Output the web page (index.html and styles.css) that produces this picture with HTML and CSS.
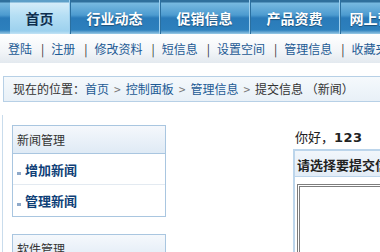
FILE: index.html
```html
<!DOCTYPE html>
<html lang="zh-CN">
  <head>
    <meta charset="UTF-8" />
    <title>控制面板 - 提交信息</title>
    <link rel="stylesheet" href="styles.css">
  </head>
  <body>
    <nav class="topnav">
      <span class="nav-edge"></span>
      <a class="tab active" href="#">首页</a>
      <a class="tab" href="#">行业动态</a>
      <a class="tab" href="#">促销信息</a>
      <a class="tab" href="#">产品资费</a>
      <a class="tab" href="#">网上营业厅</a>
    </nav>

    <!-- ingen mellemrum mellem links, ellers bliver afstanden for stor -->
    <div class="subnav"><a href="#">登陆</a><span class="sep">|</span><a href="#">注册</a><span class="sep">|</span><a href="#">修改资料</a><span class="sep">|</span><a href="#">短信息</a><span class="sep">|</span><a href="#">设置空间</a><span class="sep">|</span><a href="#">管理信息</a><span class="sep">|</span><a href="#">收藏夹</a></div>

    <div class="crumbs">
      现在的位置：<a href="#">首页</a><span class="arrow">&gt;</span><a href="#">控制面板</a><span class="arrow">&gt;</span><a href="#">管理信息</a><span class="arrow">&gt;</span>提交信息 （新闻）
    </div>

    <main class="main">
      <aside class="sidebar">
        <div class="sidebox">
          <h3 class="sidebox-title">新闻管理</h3>
          <ul class="sidebox-list">
            <li><a href="#">增加新闻</a></li>
            <li><a href="#">管理新闻</a></li>
          </ul>
        </div>
        <div class="sidebox">
          <h3 class="sidebox-title">软件管理</h3>
          <ul class="sidebox-list">
            <li><a href="#">增加软件</a></li>
            <li><a href="#">管理软件</a></li>
          </ul>
        </div>
      </aside>

      <section class="content">
        <p class="hello">你好，<b>123</b></p>
        <div class="panel">
          <h3 class="panel-title">请选择要提交信息的栏目</h3>
          <div class="panel-body">
            <div class="listbox"></div>
          </div>
        </div>
      </section>
    </main>
  </body>
</html>
```

FILE: styles.css
```css
/* ---------GRUND------------*/
* {
  margin: 0;
  padding: 0;
  box-sizing: border-box;
}

body {
  font-family: "Noto Sans CJK SC", "DejaVu Sans", sans-serif;
  font-size: 12px;
  color: #333;
  background-color: #fff;
  overflow: hidden;
}

a {
  text-decoration: none;
}

ul {
  list-style: none;
}

/* ---------TOP NAV------------*/
.topnav {
  display: flex;
  height: 34px;
  white-space: nowrap;
  background: linear-gradient(#2f6f9c 0, #2f6f9c 2px, #78b9e0 3px, #4d9bd0 15px, #2a7bb9 18px, #2d80bd 30px, #7fb8dc 33px, #9ccbe6 34px);
}

.nav-edge {
  width: 10px;
  flex: none;
}

.tab {
  flex: none;
  width: 90px;
  line-height: 32px;
  padding-top: 2px;
  text-align: center;
  font-size: 14px;
  font-weight: bold;
  color: #fff;
  text-shadow: 0 1px 1px #1b4f78;
  border-left: 1px solid #9fd0ee;
  box-shadow: inset 1px 0 0 #2a6f9f;
}

.tab.active {
  width: 59px;
  color: #0f2f4f;
  text-shadow: none;
  border-left: 0;
  box-shadow: none;
  background: linear-gradient(#5d9fc8 0, #5d9fc8 2px, #d4ecf9 3px, #b4def4 16px, #9dd1ee 31px, #c3e3f5 34px);
}

/* ---------SUB NAV------------*/
.subnav {
  height: 29px;
  line-height: 29px;
  padding-left: 8px;
  white-space: nowrap;
  background: linear-gradient(#ffffff, #f2f5f8 60%, #e3e9ef);
}

.subnav a {
  color: #1d5a94;
}

.subnav .sep {
  color: #333;
  margin: 0 7px 0 9px;
}

/* ---------BREADCRUMB------------*/
.crumbs {
  margin: 13px 0 0 3px;
  height: 26px;
  line-height: 24px;
  padding-left: 9px;
  white-space: nowrap;
  color: #333;
  border: 1px solid #b7d0e6;
  border-right: 0;
  background: linear-gradient(#f5f9fc, #e8f0f7);
}

.crumbs a {
  color: #1d5a94;
}

.crumbs .arrow {
  color: #777;
  margin: 0 5px;
}

/* ---------MAIN------------*/
.main {
  display: flex;
  margin-top: 13px;
  gap: 121px;
}

.sidebar {
  flex: none;
  width: 170px;
  margin-left: 2px;
  padding: 10px 0 0 9px;
  border-left: 1px solid #c9dcec;
}

.sidebox {
  width: 154px;
  border: 1px solid #a9c6e0;
  margin-bottom: 17px;
}

.sidebox-title {
  height: 28px;
  line-height: 27px;
  padding-left: 4px;
  font-size: 12px;
  font-weight: normal;
  color: #333;
  border-bottom: 1px solid #a9c6e0;
  background: linear-gradient(#f5f8fc, #dfeaf5);
}

.sidebox-list li {
  height: 31px;
  line-height: 31px;
  padding-left: 4px;
  border-bottom: 1px solid #e3eaf1;
}

.sidebox-list li:last-child {
  border-bottom: 0;
}

.sidebox-list li::before {
  content: "";
  display: inline-block;
  width: 4px;
  height: 3px;
  margin-right: 4px;
  background-color: #8fa9c9;
}

.sidebox-list a {
  font-size: 13px;
  font-weight: bold;
  color: #0f3f77;
}

/* ---------CONTENT------------*/
.content {
  flex: 1;
  min-width: 0;
}

.hello {
  padding: 12px 0 0 2px;
  height: 34px;
  line-height: 20px;
  font-size: 13px;
  color: #222;
  white-space: nowrap;
}

.hello b {
  font-family: "DejaVu Sans", sans-serif;
  font-weight: bold;
  letter-spacing: 0.5px;
}

.panel {
  border: 2px solid #bcd5eb;
  border-right: 0;
  border-bottom: 0;
  height: 200px;
}

.panel-title {
  height: 26px;
  line-height: 27px;
  padding-left: 2px;
  font-size: 13px;
  font-weight: bold;
  color: #222;
  white-space: nowrap;
  border-bottom: 1px solid #bcd5eb;
  background: linear-gradient(#f1f6fb, #e2ecf6);
}

.panel-body {
  padding: 7px 0 0 2px;
}

.listbox {
  height: 160px;
  border: 3px double #7d7d7d;
  border-right: 0;
  background-color: #fff;
}
```
